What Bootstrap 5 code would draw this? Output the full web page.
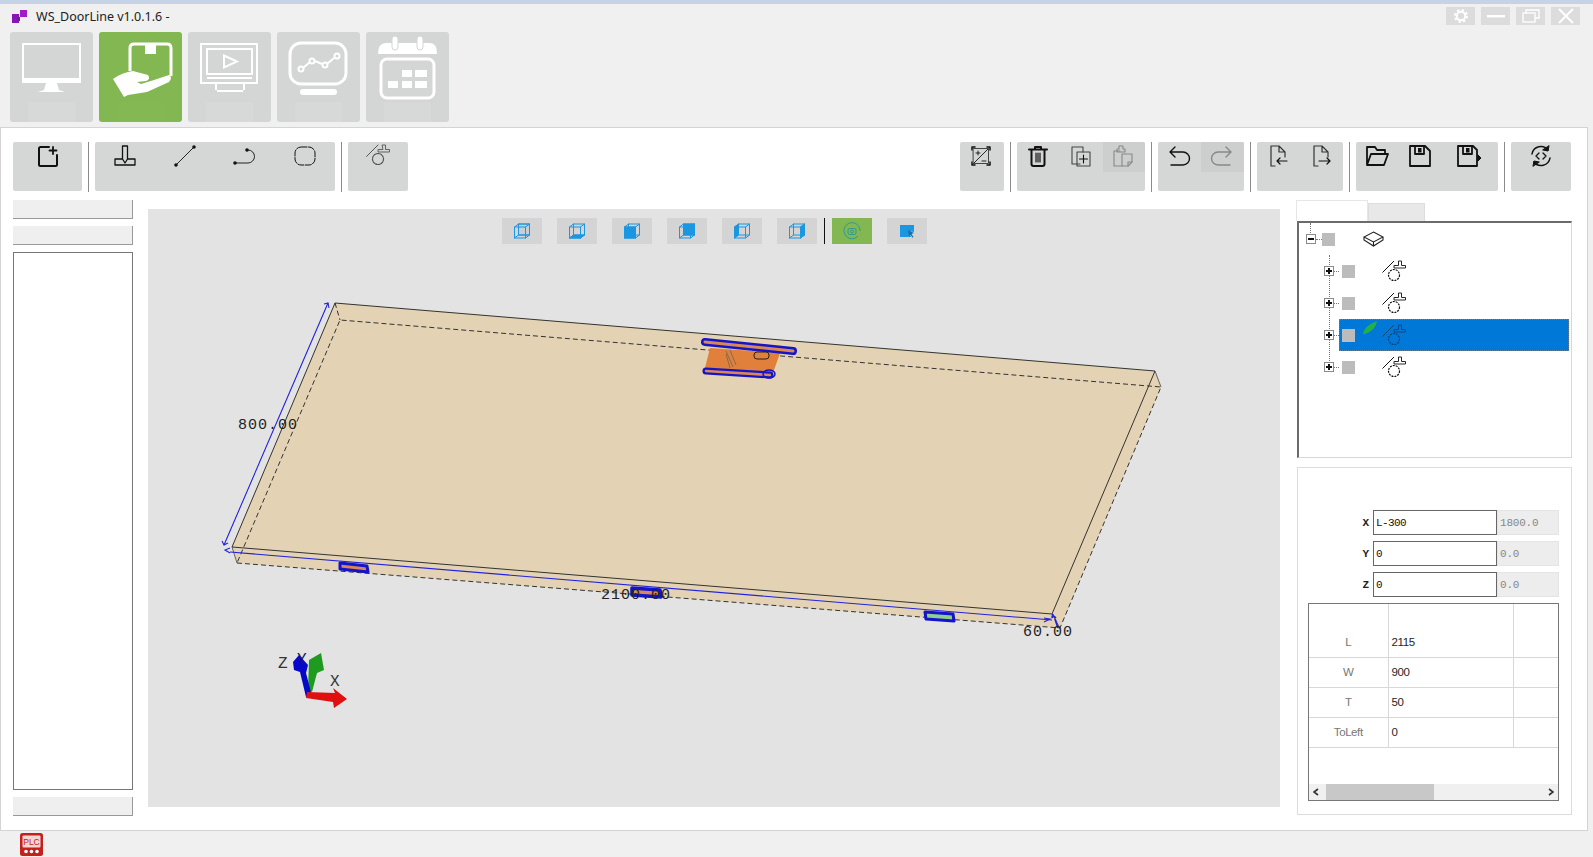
<!DOCTYPE html>
<html lang="en">

<head>
    <meta charset="UTF-8">
    <title>WS_DoorLine v1.0.1.6</title>
    <meta name="viewport" content="width=device-width, initial-scale=1">
    <link href="https://cdn.jsdelivr.net/npm/bootstrap@5.3.0/dist/css/bootstrap.min.css" rel="stylesheet">
    <style>
        html, body { height: 100%; overflow: hidden; }
        body { background: #f0f0f0; font-family: "Noto Sans", sans-serif; color: #222; }

        /* title + module tiles */
        .app-head { border-top: 4px solid #c5d3e6; height: 127px; padding: 0 13px 0 10px; }
        .app-title { height: 28px; padding-bottom: 2px; }
        .app-logo { margin: 0 8px 0 2px; }
        .app-name { font-size: 12.5px; color: #222; }
        .win-btns { gap: 6px; }
        .win-btn { width: 29px; height: 18px; margin-top: 3px; background: #dcdcdc; }
        .tile { width: 83px; height: 90px; background: #d4d5d5; border: 0; border-radius: 3px; padding: 0; position: relative; }
        .tile:hover, .tile:active { background: #d4d5d5 !important; }
        .tile.on, .tile.on:hover { background: #82b752 !important; }
        .tile svg { display: block; }
        .tile-cap { display: block; position: absolute; left: 18px; right: 18px; bottom: 0; height: 20px; background: #d7d8d8; }
        .tile.on .tile-cap { background: #83b853; }

        /* white work area */
        .work { flex: 1 1 auto; margin-right: 5px; background: #fff; border: 1px solid #d4d4d4; min-height: 0; }

        .toolbar { padding: 14px 16px 0 12px; gap: 6px; }
        .tool-group { display: flex; height: 49px; background: #d5d6d6; border-radius: 2px; overflow: hidden; }
        .tool-btn { width: 60px; height: 49px; padding: 2px 0 0; border: 0; border-radius: 0; background: transparent; display: flex; justify-content: center; align-items: flex-start; }
        .tool-btn svg { fill: none; stroke: #111; stroke-width: 1.6; stroke-linecap: round; stroke-linejoin: round; }
        .tool-btn.w43 { width: 43px; padding-right: 2px; }
        .tool-btn.w42 { width: 42px; padding-right: 2px; }
        .tool-btn.w56 { width: 56px; padding-right: 2px; }
        .tool-btn.w69 { width: 69px; }
        .tool-btn.dim { background: linear-gradient(#cdcece 30px, transparent 30px); }
        .tool-btn.dim svg { stroke: #888; }
        .tool-sep { width: 1px; height: 50px; background: #8a8a8a; }
        .g-fit { width: 44px; }
        .g-edit { width: 128px; }

        .work-body { margin-top: 8px; }
        .side-left { width: 120px; margin-left: 12px; gap: 7px; }
        .side-bar { height: 19px; background: #efefef; border-bottom: 1px solid #999; border-right: 1px solid #999; }
        .side-box { height: 538px; background: #fff; border: 1px solid #777; }

        /* 3d view */
        .viewport { position: relative; width: 1132px; height: 598px; margin: 9px 16px 0 15px; background: #e3e3e3; }
        .viewport > svg { position: absolute; inset: 0; }
        .view-tools { position: relative; padding-top: 9px; gap: 15px; }
        .view-btn { width: 40px; height: 26px; padding: 0; border: 0; border-radius: 0; background: #d4d4d4; display: flex; justify-content: center; align-items: center; }
        .view-btn.on, .view-btn.on:hover { background: #82b752; }
        .view-btn svg { fill: none; stroke: #1b96e0; stroke-width: 1; }
        .view-sep { width: 1px; height: 26px; margin: 0 -8px 0 -8px; background: #111; }
        .axis-labels { font-family: "Liberation Mono", monospace; font-size: 16px; }
        .dim-labels { font-family: "Liberation Mono", monospace; font-size: 15px; letter-spacing: 1px; }

        /* right column */
        .side-right { width: 276px; }
        .tree-tabs { height: 21px; align-items: flex-end; margin-top: 0; }
        .tree-tab { width: 72px; height: 21px; background: #fff; border: 1px solid #e6e6e6; border-bottom: 0; }
        .tree-tab.off { width: 57px; height: 18px; background: #e8e8e8; border-color: #ddd; }
        .tree-box { height: 237px; margin: 0 0 0 1px; background: #fff; border: 1px solid #d8d8d8; border-top: 2px solid #6b6b6b; border-left: 2px solid #6b6b6b; position: relative; overflow: hidden; }
        .tree-row { height: 32px; display: flex; align-items: center; }
        .tree-exp { width: 10px; height: 10px; background: #fff; border: 1px solid #8a8a8a; position: relative; flex: none; z-index: 1; }
        .tree-exp::before { content: ""; position: absolute; left: 1px; right: 1px; top: 3px; height: 2px; background: #111; }
        .tree-exp.plus::after { content: ""; position: absolute; top: 1px; bottom: 1px; left: 3px; width: 2px; background: #111; }
        .tree-dots { width: 6px; border-top: 1px dotted #777; flex: none; }
        .tree-kids .tree-dots { width: 5px; }
        .tree-check { width: 13px; height: 13px; background: #bcbcbc; flex: none; }
        .tree-cell { flex: 1 1 auto; height: 32px; display: flex; align-items: center; padding-left: 3px; margin-right: 2px; position: relative; }
        .tree-cell.sel { background: #0078d7; outline: 1px dotted #5a7fa0; outline-offset: -1px; }
        .tree-root { padding-left: 7px; position: relative; }
        .tree-root::before { content: ""; position: absolute; left: 11px; top: 0; height: 12px; border-left: 1px dotted #777; }
        .tree-root-icon { margin-left: 28px; }
        .tree-part { margin-left: 27px; color: #111; }
        .tree-cell.sel .tree-part { color: #123f6e; }
        .tree-kids { position: relative; padding-left: 25px; }
        .tree-kids::before { content: ""; position: absolute; left: 30px; top: 0; height: 112px; border-left: 1px dotted #777; }
        .tree-leaf { position: absolute; left: 23px; top: 1px; }

        .prop-panel { height: 348px; margin: 9px 0 0 1px; background: #fff; border: 1px solid #dcdcdc; padding: 42px 12px 0 10px; }
        .prop-row { height: 25px; margin-bottom: 6px; display: flex; align-items: center; }
        .prop-key { width: 66px; text-align: right; padding-right: 4px; font: 700 11px "Liberation Mono", monospace; }
        .prop-in { width: 124px; height: 25px; min-height: 0; padding: 0 2px; border: 1px solid #666; border-radius: 0; font: 11px "Liberation Mono", monospace; letter-spacing: -.6px; color: #111; box-shadow: none; }
        .prop-calc { width: 62px; height: 25px; min-height: 0; padding: 0 2px; border: 1px solid #e4e4e4; border-radius: 0; background: #ededed; font: 11px "Liberation Mono", monospace; letter-spacing: -.2px; color: #888; }
        .grid-wrap { height: 198px; width: 251px; border: 1px solid #777; display: flex; flex-direction: column; }
        .grid-wrap .table { margin: 0; table-layout: fixed; font: 11.5px "Liberation Sans", sans-serif; letter-spacing: -.4px; }
        .grid-wrap .table td { height: 30px; padding: 0 3px; vertical-align: middle; border: 0 solid #d8d8d8; border-bottom-width: 1px; border-right-width: 1px; }
        .grid-wrap .table tr:first-child td { height: 23px; border-bottom: 0; }
        .grid-wrap .table td:last-child { border-right: 0; }
        .grid-wrap .table td.grid-key { color: #777; text-align: center; }
        .grid-col-key { width: 79px; }
        .grid-col-val { width: 125px; }
        .grid-scroll { margin-top: auto; height: 16px; background: #f0f0f0; display: flex; align-items: center; justify-content: space-between; padding: 0 4px; position: relative; }
        .grid-thumb { position: absolute; left: 17px; width: 108px; top: 0; bottom: 0; background: #c8c8c8; }
        .grid-arrow { width: 6px; height: 8px; fill: none; stroke: #333; stroke-width: 1.6; }

        .status { height: 26px; padding-left: 20px; }
    </style>
</head>

<body class="d-flex flex-column">
    <svg width="0" height="0" class="position-absolute">
        <symbol id="part" viewBox="0 0 24 22">
            <path d="M0.500 12.500 12 1" fill="none" stroke="currentColor" stroke-width="1" />
            <path d="M16.500 1h3v4.500h4V8H12V5.500h4.500z" fill="none" stroke="currentColor" stroke-width=".9" />
            <circle cx="12" cy="15" r="5.500" fill="none" stroke="currentColor" stroke-width="1.200" stroke-dasharray="2 1" />
        </symbol>
        <symbol id="cube" viewBox="0 0 18 18">
            <rect x="1.500" y="5" width="11" height="11" />
            <rect x="5.500" y="2" width="11" height="11" />
            <path d="m1.500 5 4-3m7 3 4-3m-15 14 4-3m7 3 4-3" />
        </symbol>
    </svg>

    <header class="app-head flex-none">
        <div class="app-title d-flex align-items-center">
            <svg class="app-logo" width="16" height="16" viewBox="0 0 16 16">
                <rect x="0" y="5" width="7" height="9" fill="#8a14b8" />
                <rect x="8" y="1" width="7" height="7" fill="#a01cc4" />
                <rect x="5" y="8" width="3" height="4" fill="#5c2d86" />
            </svg>
            <span class="app-name">WS_DoorLine v1.0.1.6 -</span>
            <div class="win-btns ms-auto d-flex align-self-start">
                <div class="win-btn d-flex justify-content-center align-items-center">
                    <svg width="16" height="16" viewBox="0 0 16 16"><circle cx="8" cy="8" r="4.200" fill="none" stroke="#fff" stroke-width="2" /><circle cx="8" cy="8" r="6" fill="none" stroke="#fff" stroke-width="2" stroke-dasharray="2.400 2.300" /></svg>
                </div>
                <div class="win-btn d-flex justify-content-center align-items-center">
                    <svg width="18" height="4" viewBox="0 0 18 4"><rect width="18" height="2.400" y="1" fill="#fff" /></svg>
                </div>
                <div class="win-btn d-flex justify-content-center align-items-center">
                    <svg width="18" height="14" viewBox="0 0 18 14" fill="none" stroke="#fff" stroke-width="1.300"><rect x="1" y="4" width="12" height="9" /><path d="M4 4V1h13v8h-4" /></svg>
                </div>
                <div class="win-btn d-flex justify-content-center align-items-center">
                    <svg width="16" height="16" viewBox="0 0 16 16" fill="none" stroke="#fff" stroke-width="2"><path d="m1 1 14 14M15 1 1 15" /></svg>
                </div>
            </div>
        </div>
        <nav class="d-flex win-btns">
            <button class="btn tile" type="button">
                <span class="tile-cap"></span>
                <svg class="position-relative" width="83" height="90" viewBox="0 0 83 90" fill="#fff">
                    <path d="M12 11h59v40H12zm2 2v33h55V13z" fill-rule="evenodd" />
                    <path d="M36 51h11l2 7 6 2H28l6-2z" />
                </svg>
            </button>
            <button class="btn tile on" type="button">
                <span class="tile-cap"></span>
                <svg class="position-relative" width="83" height="90" viewBox="0 0 83 90" fill="#fff">
                    <path d="M31 39V16q0-4 4-4h33q4 0 4 4v28" fill="none" stroke="#fff" stroke-width="3" />
                    <rect x="46" y="13" width="11" height="9" />
                    <path d="M14 47q10-7 20-8l15 4q3 4-2 6l-9 1 4 2 13-4 15-5q4 2 0 7L48 60l-19 3-4 2z" />
                </svg>
            </button>
            <button class="btn tile" type="button">
                <span class="tile-cap"></span>
                <svg class="position-relative" width="83" height="90" viewBox="0 0 83 90" fill="none" stroke="#fff" stroke-width="2">
                    <rect x="13" y="12" width="56" height="39" />
                    <rect x="19" y="17" width="45" height="25" />
                    <path d="M36 23.500 49 29.500 36 35.500z" />
                    <path d="M19 46h45M27 46h3M28 52v6M56 52v6M29 59h26" />
                </svg>
            </button>
            <button class="btn tile" type="button">
                <span class="tile-cap"></span>
                <svg class="position-relative" width="83" height="90" viewBox="0 0 83 90" fill="none" stroke="#fff" stroke-width="3">
                    <rect x="13" y="11" width="56" height="41" rx="11" />
                    <path d="m26 36 7-6m5-1 7 3m5 0 7-6" stroke-width="2" />
                    <g stroke-width="2"><circle cx="24" cy="37" r="2.500" /><circle cx="35" cy="29" r="2.500" /><circle cx="48" cy="33" r="2.500" /><circle cx="60" cy="24" r="2.500" /></g>
                    <rect x="23" y="57" width="37" height="6" rx="3" fill="#fff" stroke="none" />
                </svg>
            </button>
            <button class="btn tile" type="button">
                <span class="tile-cap"></span>
                <svg class="position-relative" width="83" height="90" viewBox="0 0 83 90" fill="#fff">
                    <path d="M12 22q0-11 8-11h44q7 0 7 11z" />
                    <rect x="26" y="4" width="6" height="14" rx="3" stroke="#d4d5d5" />
                    <rect x="51" y="4" width="6" height="14" rx="3" stroke="#d4d5d5" />
                    <rect x="15" y="27" width="53" height="39" rx="6" fill="none" stroke="#fff" stroke-width="3" />
                    <path d="M36 38h10v7H36zm13 0h12v7H49zM22 49h10v7H22zm14 0h10v7H36zm13 0h12v7H49z" />
                </svg>
            </button>
        </nav>
    </header>

    <main class="work d-flex flex-column">
        <div class="toolbar d-flex">
            <div class="tool-group">
                <button class="btn tool-btn w69" type="button"><svg width="24" height="24" viewBox="0 0 24 24"><path d="M13 3H4.500A1.500 1.500 0 0 0 3 4.500v16A1.500 1.500 0 0 0 4.500 22h15a1.500 1.500 0 0 0 1.500-1.500V11" stroke-width="2" /><path d="M17 3v7m-3.500-3.500h7" stroke-width="1.800" /></svg></button>
            </div>
            <div class="tool-sep"></div>
            <div class="tool-group">
                <button class="btn tool-btn" type="button"><svg width="24" height="24" viewBox="0 0 24 24"><path d="M9.500 2v13l2.500 4 2.500-4V2zM9.500 15H2v6h20v-6h-7.500" stroke-width="1.300" /></svg></button>
                <button class="btn tool-btn" type="button"><svg width="24" height="24" viewBox="0 0 24 24"><path d="M3 21 21 3" stroke-width=".9" /><circle cx="3" cy="21" r="1" fill="#111" /><circle cx="21" cy="3" r="1" fill="#111" /></svg></button>
                <button class="btn tool-btn" type="button"><svg width="24" height="24" viewBox="0 0 24 24"><path d="M2 19h13a6.500 6.500 0 0 0 0-13h-1" stroke-width=".9" /><circle cx="2" cy="19" r="1" fill="#111" /><circle cx="14" cy="6" r="1" fill="#111" /></svg></button>
                <button class="btn tool-btn" type="button"><svg width="24" height="24" viewBox="0 0 24 24"><rect x="2" y="3" width="20" height="18" rx="6" stroke-width="1" stroke-dasharray="6 1.500" /></svg></button>
            </div>
            <div class="tool-sep"></div>
            <div class="tool-group">
                <button class="btn tool-btn" type="button" style="color:#555"><svg width="24" height="22"><use href="#part" /></svg></button>
            </div>

            <div class="tool-group g-fit ms-auto">
                <button class="btn tool-btn w43" type="button"><svg width="24" height="24" viewBox="0 0 24 24"><path d="M3 6V3h3m12 0h3v3M3 18v3h3m12 0h3v-3" stroke-width="1.500" /><rect x="4.500" y="4.500" width="15" height="15" stroke-width="1" stroke="#444" /><path d="m5 19 14-14M7 9h4M9 7v4m4 6h4" stroke-width=".9" /></svg></button>
            </div>
            <div class="tool-sep"></div>
            <div class="tool-group g-edit">
                <button class="btn tool-btn w43" type="button"><svg width="24" height="24" viewBox="0 0 24 24"><path d="M3 5.500h18M9 5.500V3h6v2.500M5.500 5.500V20a2 2 0 0 0 2 2h9a2 2 0 0 0 2-2V5.500" stroke-width="2" /><path d="M10 9v9m2-9v9m2-9v9" stroke-width="1.200" /></svg></button>
                <button class="btn tool-btn w43" type="button"><svg width="24" height="24" viewBox="0 0 24 24"><path d="M11 20H3V3h11v5" stroke="#444" stroke-width="1.100" /><rect x="8" y="8" width="13" height="14" stroke="#444" stroke-width="1.100" /><path d="M14.500 11v8M10.500 15h8" stroke-width="1.100" /></svg></button>
                <button class="btn tool-btn w42 dim" type="button"><svg width="24" height="24" viewBox="0 0 24 24"><path d="M9 7H3v15h8" stroke-width="1.100" /><path d="M6 5h2V2h4v3h2v3H6z" stroke-width="1.100" /><path d="M11 10h10v8l-4 4h-6z" stroke-width="1.100" /><path d="M21 18h-4v4" stroke-width="1.100" /></svg></button>
            </div>
            <div class="tool-sep"></div>
            <div class="tool-group">
                <button class="btn tool-btn w43" type="button"><svg width="24" height="24" viewBox="0 0 24 24"><path d="m8 3-5 5 5 5M3 8h13a6 6 0 0 1 0 13H4" stroke-width="1.400" /></svg></button>
                <button class="btn tool-btn w43 dim" type="button"><svg width="24" height="24" viewBox="0 0 24 24"><path d="m16 3 5 5-5 5M21 8H8a6 6 0 0 0 0 13h12" stroke-width="1.400" /></svg></button>
            </div>
            <div class="tool-sep"></div>
            <div class="tool-group">
                <button class="btn tool-btn w43" type="button"><svg width="24" height="24" viewBox="0 0 24 24"><path d="M9 22H5V2h8l6 6v5M13 2v6h6" stroke="#333" stroke-width="1.200" /><path d="M21 17H11m3-3-3 3 3 3" stroke-width="1.200" /></svg></button>
                <button class="btn tool-btn w43" type="button"><svg width="24" height="24" viewBox="0 0 24 24"><path d="M9 22H5V2h8l6 6v5M13 2v6h6" stroke="#333" stroke-width="1.200" /><path d="M10 17h11m-3-3 3 3-3 3" stroke-width="1.200" /></svg></button>
            </div>
            <div class="tool-sep"></div>
            <div class="tool-group">
                <button class="btn tool-btn w43" type="button"><svg width="26" height="24" viewBox="0 0 26 24"><path d="M3 21V3h8l2 3h8v4M3 21l4-11h17l-4 11z" stroke-width="1.800" /></svg></button>
                <button class="btn tool-btn w43" type="button"><svg width="24" height="24" viewBox="0 0 24 24"><path d="M2 2h15l5 5v15H2z" stroke-width="1.800" /><path d="M7 2v8h9V2" stroke-width="1.800" /><rect x="10" y="4" width="3.500" height="4.500" fill="#111" stroke="none" /></svg></button>
                <button class="btn tool-btn w56" type="button"><svg width="26" height="24" viewBox="0 0 26 24"><path d="M2 2h15l4 4v16H2z" stroke-width="1.800" /><path d="M7 2v8h9V2" stroke-width="1.800" /><rect x="10" y="4" width="3.500" height="4.500" fill="#111" stroke="none" /><path d="m22 11 3 3-3 3z" fill="#111" stroke-width="1" /></svg></button>
            </div>
            <div class="tool-sep"></div>
            <div class="tool-group">
                <button class="btn tool-btn" type="button"><svg width="24" height="24" viewBox="0 0 24 24"><path d="M3 10a9 9 0 0 1 16-4M21 14a9 9 0 0 1-16 4" stroke-width="1.500" /><path d="m20 2-1 5-5-1zM4 22l1-5 5 1z" fill="#111" stroke-width="1" /><path d="m10 9-3 3 3 3m4-6 3 3-3 3" stroke-width="1.300" /></svg></button>
            </div>
        </div>

        <div class="work-body d-flex">
            <aside class="side-left d-flex flex-column">
                <div class="side-bar"></div>
                <div class="side-bar"></div>
                <div class="side-box"></div>
                <div class="side-bar"></div>
            </aside>

            <section class="viewport">
                <svg width="1132" height="598" viewBox="148 209 1132 598">
                    <!-- board -->
                    <g stroke-linejoin="round">
                        <polygon points="335,303 1155,371 1161,387 1060,628 237,563 232,547" fill="#e3d2b3" />
                        <path d="M335 303 1155 371 1052 614 232 547Z" fill="none" stroke="#333" stroke-width="1" />
                        <path d="m232 547 5 16M1155 371l6 16M1052 614l8 14" fill="none" stroke="#444" stroke-width=".8" />
                        <path d="M237 563 1060 628 1161 387 340 320 237 563M335 303l5 17" fill="none" stroke="#333" stroke-width="1" stroke-dasharray="5 3" />
                    </g>
                    <!-- pocket on the face -->
                    <polygon points="710,348 780,353 773,373 705,368" fill="#e0803a" />
                    <path d="M705 342 793 351" stroke="#1414c8" stroke-width="8" stroke-linecap="round" />
                    <path d="M705 342 793 351" stroke="#d98757" stroke-width="3" stroke-linecap="round" />
                    <path d="M706 371 770 375" stroke="#1414c8" stroke-width="7" stroke-linecap="round" />
                    <path d="M706 371 770 375" stroke="#d98757" stroke-width="2.500" stroke-linecap="round" />
                    <ellipse cx="769" cy="374" rx="6" ry="4" fill="none" stroke="#1414c8" stroke-width="1.500" />
                    <rect x="754" y="352" width="15" height="7" rx="3" fill="#e0803a" stroke="#222" />
                    <path d="m726 351 7 16m-3-17 6 15m-10-11 4 14" fill="none" stroke="#8a6a4a" stroke-width="1" />
                    <!-- edge pockets -->
                    <path d="M340 563 367 566l1 6-28-3z" fill="#d98757" stroke="#1414c8" stroke-width="3" stroke-linejoin="round" />
                    <path d="M632 588l28 2 1 7-29-2z" fill="#d98757" stroke="#1414c8" stroke-width="3.500" stroke-linejoin="round" />
                    <path d="m925 612 28 2 1 7-28-2z" fill="#8ed08a" stroke="#1414c8" stroke-width="3" stroke-linejoin="round" />
                    <!-- dimensions -->
                    <g stroke="#2222dd" fill="none" stroke-width="1.100">
                        <path d="M328 303 224 545m6 7 822 68" />
                        <path d="m324 304 4-1 1 5m-107 233 2 4 4-2m2 5-5 2 5 3m814 65 6 1-6 3" />
                        <path d="m1052 615 4 3m-3-4-1 4m3 1 3 9" stroke-width="1.800" />
                    </g>
                    <g class="dim-labels" fill="#222">
                        <text x="238" y="429">800.00</text>
                        <text x="601" y="599">2100.00</text>
                        <text x="1023" y="636">60.00</text>
                    </g>
                    <!-- axes -->
                    <polygon points="308,690 309,660 321,653 324,670 317,673 312,692" fill="#1e9a1e" />
                    <polygon points="306,697 300,672 294,670 293,662 299,655 308,665 306,673 312,696" fill="#0808c8" />
                    <polygon points="307,692 335,693 333,688 347,699 334,708 333,702 306,698" fill="#e01010" />
                    <g class="axis-labels" fill="#333">
                        <text x="278" y="668">Z</text>
                        <text x="297" y="664" fill="#111a66">Y</text>
                        <text x="330" y="686">X</text>
                    </g>
                </svg>

                <div class="view-tools d-flex justify-content-center">
                    <button class="btn view-btn" type="button"><svg width="18" height="18"><use href="#cube" /><polygon points="5.500,2 16.500,2 16.500,13 5.500,13" fill="#1b96e0" fill-opacity=".08" /></svg></button>
                    <button class="btn view-btn" type="button"><svg width="18" height="18"><use href="#cube" /><polygon points="1.500,16 12.500,16 16.500,13 5.500,13" fill="#1b96e0" /></svg></button>
                    <button class="btn view-btn" type="button"><svg width="18" height="18"><use href="#cube" /><rect x="1.500" y="5" width="11" height="11" fill="#1b96e0" /></svg></button>
                    <button class="btn view-btn" type="button"><svg width="18" height="18"><use href="#cube" /><rect x="5.500" y="2" width="11" height="11" fill="#1b96e0" /></svg></button>
                    <button class="btn view-btn" type="button"><svg width="18" height="18"><use href="#cube" /><polygon points="1.500,5 5.500,2 5.500,13 1.500,16" fill="#1b96e0" /></svg></button>
                    <button class="btn view-btn" type="button"><svg width="18" height="18"><use href="#cube" /><polygon points="12.500,5 16.500,2 16.500,13 12.500,16" fill="#1b96e0" /></svg></button>
                    <div class="view-sep"></div>
                    <button class="btn view-btn on" type="button"><svg width="18" height="18" viewBox="0 0 18 18"><g stroke="#2e9a8e"><path d="M15 14A8 8 0 1 1 17 9" /><rect x="5" y="6.500" width="8" height="6" rx="1.500" /><circle cx="9" cy="9.500" r="1.500" /></g></svg></button>
                    <button class="btn view-btn" type="button"><svg width="18" height="18" viewBox="0 0 18 18"><path d="M2 3h14v7l-5-1 2 6H2z" fill="#1b96e0" stroke="none" /><path d="m10 8 6 3-2.500 1 2 3-1 .7-2-3L11 14z" fill="#1b6ea0" stroke="none" /></svg></button>
                </div>
            </section>

            <aside class="side-right">
                <div class="tree-tabs d-flex">
                    <div class="tree-tab"></div>
                    <div class="tree-tab off"></div>
                </div>
                <div class="tree-box">
                    <div class="tree-row tree-root">
                        <span class="tree-exp"></span><span class="tree-dots"></span>
                        <span class="tree-check"></span>
                        <svg class="tree-root-icon" width="21" height="16" viewBox="0 0 21 16" fill="none" stroke="#222" stroke-width="1.100"><path d="M10.500 1 20 6l-9.500 5L1 6zM1 6v3l9.500 6L20 9V6M10.500 11v4" /></svg>
                    </div>
                    <div class="tree-kids">
                        <div class="tree-row">
                            <span class="tree-exp plus"></span><span class="tree-dots"></span>
                            <div class="tree-cell"><span class="tree-check"></span><svg class="tree-part" width="24" height="22"><use href="#part" /></svg></div>
                        </div>
                        <div class="tree-row">
                            <span class="tree-exp plus"></span><span class="tree-dots"></span>
                            <div class="tree-cell"><span class="tree-check"></span><svg class="tree-part" width="24" height="22"><use href="#part" /></svg></div>
                        </div>
                        <div class="tree-row">
                            <span class="tree-exp plus"></span><span class="tree-dots"></span>
                            <div class="tree-cell sel"><span class="tree-check"></span>
                                <svg class="tree-leaf" width="16" height="15" viewBox="0 0 16 15"><path d="M1 14Q2 6 15 1 14 10 3 14z" fill="#22b04c" /></svg>
                                <svg class="tree-part" width="24" height="22"><use href="#part" /></svg>
                            </div>
                        </div>
                        <div class="tree-row">
                            <span class="tree-exp plus"></span><span class="tree-dots"></span>
                            <div class="tree-cell"><span class="tree-check"></span><svg class="tree-part" width="24" height="22"><use href="#part" /></svg></div>
                        </div>
                    </div>
                </div>

                <div class="prop-panel">
                    <div class="prop-row">
                        <span class="prop-key">X</span>
                        <input class="form-control prop-in" type="text" value="L-300">
                        <input class="form-control prop-calc" type="text" value="1800.0" readonly>
                    </div>
                    <div class="prop-row">
                        <span class="prop-key">Y</span>
                        <input class="form-control prop-in" type="text" value="0">
                        <input class="form-control prop-calc" type="text" value="0.0" readonly>
                    </div>
                    <div class="prop-row">
                        <span class="prop-key">Z</span>
                        <input class="form-control prop-in" type="text" value="0">
                        <input class="form-control prop-calc" type="text" value="0.0" readonly>
                    </div>
                    <div class="grid-wrap">
                        <table class="table">
                            <colgroup><col class="grid-col-key"><col class="grid-col-val"><col></colgroup>
                            <tbody>
                                <tr><td></td><td></td><td></td></tr>
                                <tr><td class="grid-key">L</td><td>2115</td><td></td></tr>
                                <tr><td class="grid-key">W</td><td>900</td><td></td></tr>
                                <tr><td class="grid-key">T</td><td>50</td><td></td></tr>
                                <tr><td class="grid-key">ToLeft</td><td>0</td><td></td></tr>
                            </tbody>
                        </table>
                        <div class="grid-scroll">
                            <svg class="grid-arrow" viewBox="0 0 6 8"><path d="M5 1 1 4l4 3" /></svg>
                            <div class="grid-thumb"></div>
                            <svg class="grid-arrow" viewBox="0 0 6 8"><path d="m1 1 4 3-4 3" /></svg>
                        </div>
                    </div>
                </div>
            </aside>
        </div>
    </main>

    <footer class="status d-flex align-items-center flex-none">
        <svg width="23" height="23" viewBox="0 0 23 23">
            <rect width="23" height="23" rx="2.500" fill="#c4211c" />
            <rect x="2.500" y="2.500" width="18" height="12" rx="1" fill="#f3d5d2" />
            <text x="11.500" y="12" text-anchor="middle" font-family="'Liberation Sans', sans-serif" font-size="8.500" fill="#c4211c">PLC</text>
            <circle cx="6" cy="18.500" r="1.800" fill="#fff" /><circle cx="11.500" cy="18.500" r="1.800" fill="#fff" /><circle cx="17" cy="18.500" r="1.800" fill="#fff" />
        </svg>
    </footer>

    <script src="https://cdn.jsdelivr.net/npm/bootstrap@5.3.0/dist/js/bootstrap.bundle.min.js"></script>
</body>

</html>
